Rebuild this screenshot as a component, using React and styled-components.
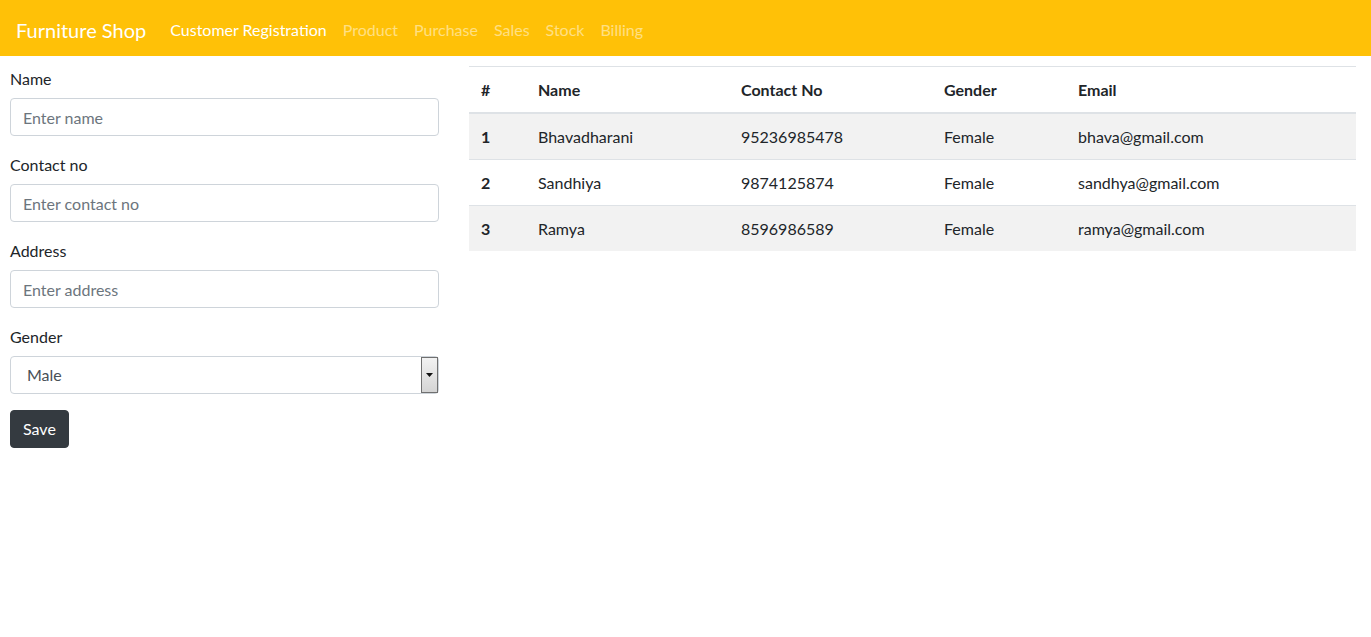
import styled, { createGlobalStyle } from "styled-components";

const customers = [
  { id: 1, name: "Bhavadharani", contact: "95236985478", gender: "Female", email: "bhava@gmail.com" },
  { id: 2, name: "Sandhiya", contact: "9874125874", gender: "Female", email: "sandhya@gmail.com" },
  { id: 3, name: "Ramya", contact: "8596986589", gender: "Female", email: "ramya@gmail.com" },
];

const links = [
  { label: "Customer Registration", active: true },
  { label: "Product" },
  { label: "Purchase" },
  { label: "Sales" },
  { label: "Stock" },
  { label: "Billing" },
];

const fields = [
  { label: "Name", placeholder: "Enter name" },
  { label: "Contact no", placeholder: "Enter contact no" },
  { label: "Address", placeholder: "Enter address" },
];

export default function App() {
  return (
    <>
      <GlobalStyle />
      <Navbar>
        <Brand href="#">Furniture Shop</Brand>
        <NavList>
          {links.map((link) => (
            <NavLink key={link.label} href="#" $active={link.active}>
              {link.label}
            </NavLink>
          ))}
        </NavList>
      </Navbar>

      <Content>
        <Form onSubmit={(e) => e.preventDefault()}>
          {fields.map((field) => (
            <FormGroup key={field.label}>
              <Label>{field.label}</Label>
              <Input type="text" placeholder={field.placeholder} />
            </FormGroup>
          ))}
          <FormGroup $last>
            <Label>Gender</Label>
            <SelectWrap>
              <Select defaultValue="Male">
                <option>Male</option>
                <option>Female</option>
              </Select>
              <SelectButton>
                <svg width="7" height="4" viewBox="0 0 7 4">
                  <path d="M0 0h7L3.5 4z" fill="#111" />
                </svg>
              </SelectButton>
            </SelectWrap>
          </FormGroup>
          <SaveButton type="submit">Save</SaveButton>
        </Form>

        <TableWrap>
          <Table>
            <thead>
              <tr>
                <Th style={{ width: 57 }}>#</Th>
                <Th style={{ width: 203 }}>Name</Th>
                <Th style={{ width: 203 }}>Contact No</Th>
                <Th style={{ width: 134 }}>Gender</Th>
                <Th>Email</Th>
              </tr>
            </thead>
            <tbody>
              {customers.map((c, i) => (
                <Row key={c.id} $striped={i % 2 === 0}>
                  <RowHead>{c.id}</RowHead>
                  <Td>{c.name}</Td>
                  <Td>{c.contact}</Td>
                  <Td>{c.gender}</Td>
                  <Td>{c.email}</Td>
                </Row>
              ))}
            </tbody>
          </Table>
        </TableWrap>
      </Content>
    </>
  );
}

const GlobalStyle = createGlobalStyle`
  * { box-sizing: border-box; }
  body {
    margin: 0;
    background: #fff;
    color: #212529;
    font-family: Lato, "Open Sans", sans-serif;
    font-size: 16px;
    line-height: 1.5;
  }
`;

const Navbar = styled.nav`
  height: 56px;
  display: flex;
  align-items: center;
  padding: 10px 16px 6px;
  background: #ffc107;
`;

const Brand = styled.a`
  margin-right: 16px;
  font-size: 20px;
  line-height: 30px;
  color: #fff;
  text-decoration: none;
  white-space: nowrap;
`;

const NavList = styled.div`
  display: flex;
`;

const NavLink = styled.a`
  padding: 8px;
  font-size: 16px;
  color: ${(p) => (p.$active ? "#fff" : "rgba(255, 255, 255, 0.5)")};
  text-decoration: none;
  white-space: nowrap;
`;

const Content = styled.div`
  display: grid;
  grid-template-columns: 429px 1fr;
  gap: 30px;
  padding: 0 15px 0 10px;
`;

const Form = styled.form`
  padding-top: 11px;
`;

const FormGroup = styled.div`
  margin-bottom: ${(p) => (p.$last ? "16px" : "17px")};
`;

const Label = styled.label`
  display: block;
  margin-bottom: 7px;
`;

const Input = styled.input`
  display: block;
  width: 100%;
  height: 38px;
  padding: 6px 12px;
  font: inherit;
  color: #495057;
  border: 1px solid #ced4da;
  border-radius: 4px;
  outline: none;

  &::placeholder {
    color: #6c757d;
  }
`;

const SelectWrap = styled.div`
  position: relative;
`;

const Select = styled.select`
  display: block;
  width: 100%;
  height: 38px;
  padding: 6px 12px 6px 16px;
  font: inherit;
  color: #495057;
  background: #fff;
  border: 1px solid #ced4da;
  border-radius: 4px;
  appearance: none;
  outline: none;
`;

const SelectButton = styled.span`
  position: absolute;
  top: 1px;
  right: 1px;
  width: 17px;
  height: 36px;
  display: flex;
  align-items: center;
  justify-content: center;
  border: 1px solid #707070;
  background: linear-gradient(#f2f2f2, #d4d4d4);
  pointer-events: none;
`;

const SaveButton = styled.button`
  height: 38px;
  padding: 6px 12px;
  font: inherit;
  color: #fff;
  background: #343a40;
  border: 1px solid #343a40;
  border-radius: 4px;
`;

const TableWrap = styled.div`
  padding-top: 10px;
`;

const Table = styled.table`
  width: 100%;
  border-collapse: collapse;
`;

const Th = styled.th`
  padding: 11px 12px 10px;
  text-align: left;
  font-weight: 700;
  border-top: 1px solid #dee2e6;
  border-bottom: 2px solid #dee2e6;
`;

const Row = styled.tr`
  background: ${(p) => (p.$striped ? "#f2f2f2" : "#fff")};
`;

const RowHead = styled.th`
  padding: 11px 12px 10px;
  text-align: left;
  font-weight: 700;
  border-top: 1px solid #dee2e6;
`;

const Td = styled.td`
  padding: 11px 12px 10px;
  border-top: 1px solid #dee2e6;
`;
